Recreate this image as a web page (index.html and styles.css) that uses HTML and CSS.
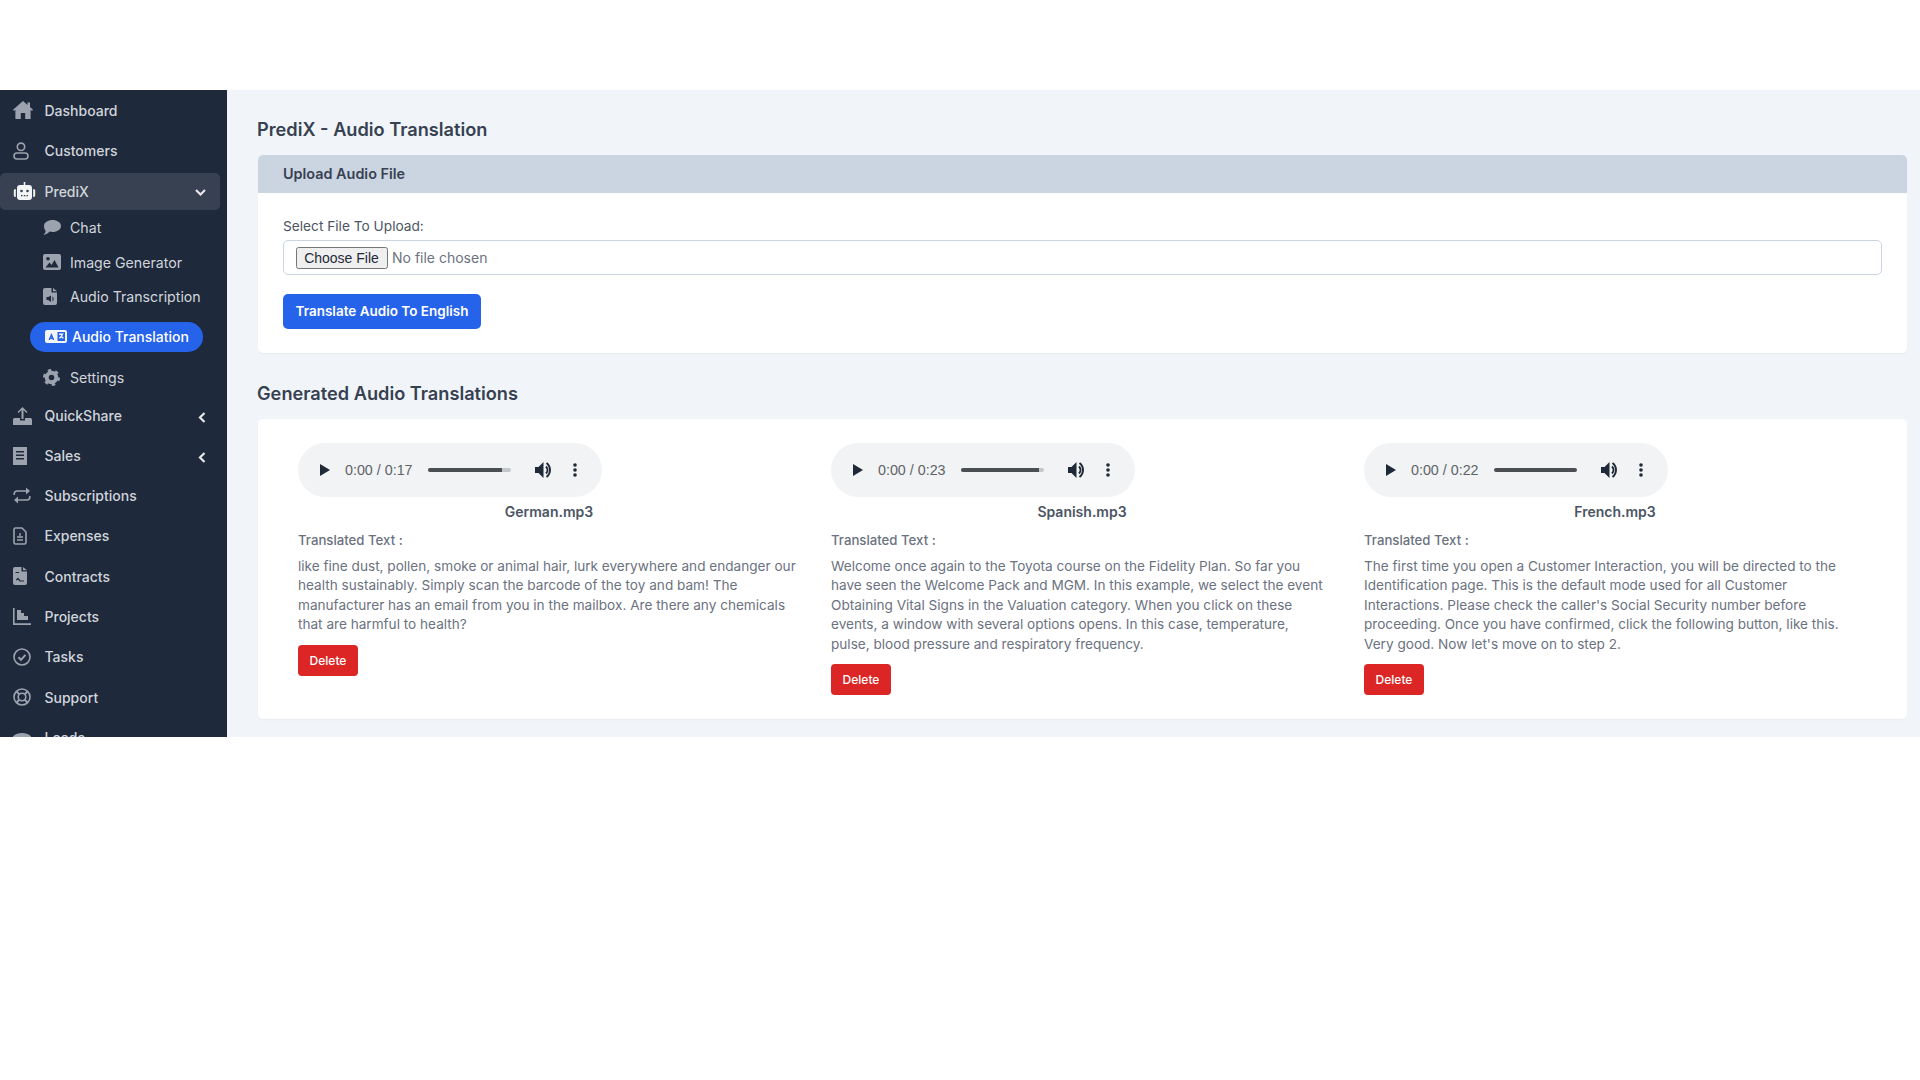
FILE: index.html
```html
<!DOCTYPE html>
<html lang="en">
<head>
<meta charset="utf-8">
<title>PrediX - Audio Translation</title>
<link rel="stylesheet" href="styles.css">
</head>
<body>
<div class="app">
  <aside class="sidebar">
    <nav class="nav">
      <a class="item"><span class="slot"><svg width="20" height="18" viewBox="0 0 20 18"><path d="M10 0 0 8.7l1 1.2 1.4-1.1V18h5.4v-6h4.4v6h5.4V8.800l1.400 1.100 1-1.200-3-2.600V1.500h-2.500v2.600z"/></svg></span>Dashboard</a>
      <a class="item"><span class="slot"><svg width="16" height="18" viewBox="0 0 16 18"><g class="line"><circle cx="8" cy="4.800" r="3.700"/><rect x="1" y="11" width="14" height="6" rx="3"/></g></svg></span>Customers</a>
      <a class="item active"><span class="slot"><svg class="white" width="23" height="18" viewBox="0 0 23 18"><path d="M10.700 0h1.600v3h-1.600z"/><path d="M7 3h9a3 3 0 0 1 3 3v9a3 3 0 0 1-3 3H7a3 3 0 0 1-3-3V6a3 3 0 0 1 3-3zM0.800 8.500A1.800 1.800 0 0 1 2.800 7v8a1.800 1.800 0 0 1-2-1.500zM22.200 8.500A1.800 1.800 0 0 0 20.200 7v8a1.800 1.800 0 0 0 2-1.500z"/><circle class="hole" cx="8.500" cy="9" r="1.300"/><circle class="hole" cx="14.500" cy="9" r="1.300"/><path class="hole" d="M8 13h1.500v1.200H8zM10.800 13h1.500v1.200h-1.500zM13.500 13H15v1.200h-1.500z"/></svg></span>PrediX<svg class="chev-down" width="11" height="7" viewBox="0 0 11 7"><path d="M1 1l4.500 4.500L10 1"/></svg></a>
      <div class="sub">
        <a class="subitem"><span class="subslot"><svg width="18" height="15" viewBox="0 0 18 15"><path d="M9.500 0C14 0 18 2.500 18 6s-4 6-8.500 6c-1 0-2-.1-2.800-.4C5.500 13 3 15 .5 14.700c1.300-1 2-2.200 2.200-3.900C1.500 9.800 1 8 1 6 1 2.500 5 0 9.500 0z"/></svg></span>Chat</a>
        <a class="subitem"><span class="subslot"><svg width="18" height="16" viewBox="0 0 18 16"><path fill-rule="evenodd" d="M2 0h14a2 2 0 0 1 2 2v12a2 2 0 0 1-2 2H2a2 2 0 0 1-2-2V2a2 2 0 0 1 2-2zm.5 13.500h13L11.500 6l-3 5-2-2.500zM5 3a1.800 1.800 0 1 0 0 3.600A1.800 1.800 0 0 0 5 3z"/></svg></span>Image Generator</a>
        <a class="subitem"><span class="subslot"><svg width="14" height="17" viewBox="0 0 14 17"><path fill-rule="evenodd" d="M2 0h6.500v4.500H14V15a2 2 0 0 1-2 2H2a2 2 0 0 1-2-2V2a2 2 0 0 1 2-2zm8 0 4 3.200h-4zM3.500 9v3h1.800L8 14V7.500L5.300 9zM9.500 8.500v5c1.500-.6 1.500-4.400 0-5z"/></svg></span>Audio Transcription</a>
        <a class="pill"><svg width="22" height="13" viewBox="0 0 22 13"><path fill-rule="evenodd" d="M2 0h18a2 2 0 0 1 2 2v9a2 2 0 0 1-2 2H2a2 2 0 0 1-2-2V2a2 2 0 0 1 2-2zm10.500 2v9H20V2zM6.200 3.500 3.500 10h1.500l.4-1h2l.4 1h1.500L6.700 3.500zm.2 4.100h-.8l.4-1.200zM14 3.500v1.400h2.200c-.4 1-1 1.900-2.200 2.700l.7 1.100c.6-.4 1.200-.8 1.600-1.300.5.500 1 .9 1.700 1.300l.7-1.100c-.7-.4-1.200-.8-1.600-1.300.5-.8.800-1.600 1-2.400h.8V3.500z"/></svg>Audio Translation</a>
        <a class="subitem settings"><span class="subslot"><svg width="17" height="17" viewBox="0 0 17 17"><circle class="gear-body" cx="8.500" cy="8.500" r="4.800"/><circle class="gear-teeth" cx="8.500" cy="8.500" r="7"/></svg></span>Settings</a>
      </div>
      <a class="item"><span class="slot"><svg width="19" height="18" viewBox="0 0 19 18"><path d="M9.500 0 4.500 5l1 1 3-3v9h2V3l3 3 1-1zM0 12.500a1.500 1.500 0 0 1 1.500-1.500H7v2.500h5V11h5.500a1.500 1.500 0 0 1 1.500 1.500V18H0z"/></svg></span>QuickShare<svg class="chev-left" width="8" height="11" viewBox="0 0 8 11"><path d="M6.500 1 2 5.500 6.500 10"/></svg></a>
      <a class="item tight"><span class="slot"><svg width="14" height="18" viewBox="0 0 14 18"><path fill-rule="evenodd" d="M0 0h14v18H0zM3 4v1.500h8V4zm0 3.500V9h8V7.500zM3 11v1.500h8V11z"/></svg></span>Sales<svg class="chev-left" width="8" height="11" viewBox="0 0 8 11"><path d="M6.500 1 2 5.500 6.500 10"/></svg></a>
      <a class="item"><span class="slot"><svg width="18" height="17" viewBox="0 0 18 17"><g class="line"><path d="M1.200 8V7a3 3 0 0 1 3-3H14"/><path d="M16.800 9v1a3 3 0 0 1-3 3H4"/></g><path d="M13 .5 17 4l-4 3.500zM5 9.500 1 13l4 3.500z"/></svg></span>Subscriptions</a>
      <a class="item"><span class="slot"><svg width="14" height="18" viewBox="0 0 14 18"><g class="line"><path d="M2.500 1H9l4 4v10.500a1.500 1.500 0 0 1-1.500 1.500h-9A1.500 1.500 0 0 1 1 15.500v-13A1.500 1.500 0 0 1 2.500 1z"/><path d="M4 10h6M4 13h6"/></g><path d="M6.300 6h1.400v3.500H6.300z"/></svg></span>Expenses</a>
      <a class="item"><span class="slot"><svg width="14" height="18" viewBox="0 0 14 18"><path fill-rule="evenodd" d="M2 0h6.500v4.500H14V16a2 2 0 0 1-2 2H2a2 2 0 0 1-2-2V2a2 2 0 0 1 2-2zm8 0 4 3.200h-4zM3 12.500l2-2 2.500 3H11V14.500H6.800L5 12.500l-1.300 1.300zM2.500 5v1H6V5z"/></svg></span>Contracts</a>
      <a class="item"><span class="slot"><svg width="18" height="17" viewBox="0 0 18 17"><path d="M0 0h1.600v15.200H18V17H0z"/><path d="M4 2h4v3h3v3h4v4H4z"/></svg></span>Projects</a>
      <a class="item"><span class="slot"><svg width="18" height="18" viewBox="0 0 18 18"><g class="line"><circle cx="9" cy="9" r="8"/><path class="thick" d="M5.500 9.300 8 11.800l4.500-5"/></g></svg></span>Tasks</a>
      <a class="item"><span class="slot"><svg width="18" height="18" viewBox="0 0 18 18"><g class="line"><circle cx="9" cy="9" r="8"/><circle cx="9" cy="9" r="3.800"/><path class="thick" d="M3.500 3.500l2.800 2.800M14.500 3.500l-2.800 2.800M3.500 14.500l2.800-2.800M14.500 14.500l-2.800-2.800"/></g></svg></span>Support</a>
      <a class="item"><span class="slot"><svg width="18" height="10" viewBox="0 0 18 10"><path d="M9 0c3.500 0 6.500 1 9 3.300V7l-4 1.500L12.500 5c-2-.7-5-.7-7 0L4 8.500 0 7V3.300C2.500 1 5.500 0 9 0z"/></svg></span>Leads</a>
    </nav>
  </aside>
  <main class="main">
    <h1 class="title">PrediX - Audio Translation</h1>
    <section class="card">
      <div class="card-head">Upload Audio File</div>
      <div class="card-body">
        <label class="field-label" for="file">Select File To Upload:</label>
        <div class="file-box"><input id="file" class="file" type="file"></div>
        <button class="btn-primary" type="button">Translate Audio To English</button>
      </div>
    </section>
    <h2 class="title second">Generated Audio Translations</h2>
    <section class="card results">
      <article class="result">
        <div class="player">
          <svg class="play" width="10" height="12" viewBox="0 0 10 12"><path d="M0 0l10 6-10 6z"/></svg>
          <span class="time">0:00 / 0:17</span>
          <span class="track"><span class="fill" style="width:90%"></span></span>
          <svg class="vol" width="17" height="16" viewBox="0 0 17 16"><path d="M0 5v6h3.500L8.500 16V0L3.500 5z"/><path class="vol-wave" d="M11 4.500a5 5 0 0 1 0 7M11.500 1a8.800 8.800 0 0 1 0 14"/></svg>
          <svg class="dots" width="4" height="14" viewBox="0 0 4 14"><circle cx="2" cy="2" r="1.800"/><circle cx="2" cy="7" r="1.800"/><circle cx="2" cy="12" r="1.800"/></svg>
        </div>
        <div class="name">German.mp3</div>
        <div class="tt-label">Translated Text :</div>
        <p class="tt">like fine dust, pollen, smoke or animal hair, lurk everywhere and endanger our health sustainably. Simply scan the barcode of the toy and bam! The manufacturer has an email from you in the mailbox. Are there any chemicals that are harmful to health?</p>
        <button class="btn-delete" type="button">Delete</button>
      </article>
      <article class="result">
        <div class="player">
          <svg class="play" width="10" height="12" viewBox="0 0 10 12"><path d="M0 0l10 6-10 6z"/></svg>
          <span class="time">0:00 / 0:23</span>
          <span class="track"><span class="fill" style="width:95%"></span></span>
          <svg class="vol" width="17" height="16" viewBox="0 0 17 16"><path d="M0 5v6h3.500L8.500 16V0L3.500 5z"/><path class="vol-wave" d="M11 4.500a5 5 0 0 1 0 7M11.500 1a8.800 8.800 0 0 1 0 14"/></svg>
          <svg class="dots" width="4" height="14" viewBox="0 0 4 14"><circle cx="2" cy="2" r="1.800"/><circle cx="2" cy="7" r="1.800"/><circle cx="2" cy="12" r="1.800"/></svg>
        </div>
        <div class="name">Spanish.mp3</div>
        <div class="tt-label">Translated Text :</div>
        <p class="tt">Welcome once again to the Toyota course on the Fidelity Plan. So far you have seen the Welcome Pack and MGM. In this example, we select the event Obtaining Vital Signs in the Valuation category. When you click on these events, a window with several options opens. In this case, temperature, pulse, blood pressure and respiratory frequency.</p>
        <button class="btn-delete" type="button">Delete</button>
      </article>
      <article class="result">
        <div class="player">
          <svg class="play" width="10" height="12" viewBox="0 0 10 12"><path d="M0 0l10 6-10 6z"/></svg>
          <span class="time">0:00 / 0:22</span>
          <span class="track"><span class="fill" style="width:100%"></span></span>
          <svg class="vol" width="17" height="16" viewBox="0 0 17 16"><path d="M0 5v6h3.500L8.500 16V0L3.500 5z"/><path class="vol-wave" d="M11 4.500a5 5 0 0 1 0 7M11.500 1a8.800 8.800 0 0 1 0 14"/></svg>
          <svg class="dots" width="4" height="14" viewBox="0 0 4 14"><circle cx="2" cy="2" r="1.800"/><circle cx="2" cy="7" r="1.800"/><circle cx="2" cy="12" r="1.800"/></svg>
        </div>
        <div class="name">French.mp3</div>
        <div class="tt-label">Translated Text :</div>
        <p class="tt">The first time you open a Customer Interaction, you will be directed to the Identification page. This is the default mode used for all Customer Interactions. Please check the caller's Social Security number before proceeding. Once you have confirmed, click the following button, like this. Very good. Now let's move on to step 2.</p>
        <button class="btn-delete" type="button">Delete</button>
      </article>
    </section>
  </main>
</div>
</body>
</html>
```
FILE: styles.css
```css
* { box-sizing: border-box; }
html, body { margin: 0; background: #fff; }
body {
  padding-top: 90px;
  font-family: Inter, "Liberation Sans", sans-serif;
  color: #374151;
  height: 1080px;
  overflow: hidden;
}
.app { display: flex; height: 647px; overflow: hidden; background: #f1f5f9; }

/* Sidebar */
.sidebar { width: 227px; flex: none; background: #1e293b; overflow: hidden; }
.nav { display: flex; flex-direction: column; gap: 3.400px; padding-top: 2.500px; }
.item {
  flex: none;
  display: flex;
  align-items: center;
  width: 220px;
  height: 37px;
  padding-bottom: 1.500px;
  border-radius: 5px;
  font-size: 14px;
  font-weight: 500;
  color: #d1d5db;
}
.item.tight { margin: -.4px 0 -.800px; }
.item.active { background: #374151; }
.slot { width: 44.500px; padding-left: 13px; display: flex; align-items: center; flex: none; }
.nav svg { fill: #9ca3af; display: block; flex: none; }
.nav svg.white, .nav .pill svg { fill: #f3f4f6; }
.line { fill: none; stroke: #9ca3af; stroke-width: 1.600; }
.line .thick { stroke-width: 2; }
.hole { fill: #374151; }
.chev-down, .chev-left { margin-left: auto; }
.nav .chev-down { fill: none; stroke: #e5e7eb; stroke-width: 2.200; margin: 2px 14px 0 auto; }
.nav .chev-left { fill: none; stroke: #e5e7eb; stroke-width: 2.200; margin: 4px 14px 0 auto; }
.sub { display: flex; flex-direction: column; margin: -3.400px 0 -.100px; }
.subitem {
  display: flex;
  align-items: center;
  height: 34.500px;
  font-size: 14.150px;
  color: #d1d5db;
  font-weight: 400;
}
.subslot { width: 70px; padding-left: 43px; flex: none; display: flex; }
.subitem.settings { height: 35px; }
.pill {
  display: flex;
  align-items: center;
  gap: 5px;
  width: 173px;
  height: 30px;
  margin: 8px 0 8px 30px;
  padding-left: 15px;
  border-radius: 15px;
  background: #2563eb;
  color: #fff;
  font-size: 14px;
  font-weight: 500;
}
.nav .gear-body { fill: none; stroke: #9ca3af; stroke-width: 4; }
.nav .gear-teeth { fill: none; stroke: #9ca3af; stroke-width: 3; stroke-dasharray: 3.300 4; }

/* Main */
.main { flex: 1; min-width: 0; padding: 26px 13px 0 30px; }
.title { margin: 0; font-size: 18.200px; line-height: 26px; font-weight: 600; color: #374151; }
.title.second { margin-top: 27px; }
.card {
  margin: 13px 0 0 1px;
  background: #fff;
  border-radius: 5px;
  box-shadow: 0 1px 2px rgba(0, 0, 0, .04);
  overflow: hidden;
}
.card-head {
  height: 37.500px;
  padding-left: 25px;
  background: #cbd5e1;
  font-size: 14.400px;
  font-weight: 600;
  line-height: 37px;
  color: #374151;
}
.card-body { display: flex; flex-direction: column; align-items: flex-start; padding: 23.500px 25px 24px; }
.field-label { font-size: 13.700px; line-height: 20px; color: #4b5563; }
.file-box {
  width: 100%;
  height: 35px;
  margin-top: 4px;
  padding-left: 11.500px;
  display: flex;
  align-items: center;
  border: 1px solid #cbd5e1;
  border-radius: 5px;
}
.file { font-family: Inter, sans-serif; font-size: 14px; color: #6b7280; }
.file::file-selector-button { width: 92px; height: 22px; margin-right: 4.500px; color: #1f2937; font-family: "Liberation Sans", Arial, sans-serif; font-size: 14px; }
.btn-primary {
  margin-top: 19px;
  width: 198px;
  height: 34.500px;
  padding: 0;
  border: 0;
  border-radius: 5px;
  background: #2563eb;
  color: #fff;
  font-family: Inter, sans-serif;
  font-size: 13.500px;
  font-weight: 600;
}

/* Results */
.results {
  display: grid;
  grid-template-columns: repeat(3, 502px);
  column-gap: 31px;
  align-items: start;
  height: 300.500px;
  padding: 24px 40px 24px;
}
.player {
  display: flex;
  align-items: center;
  width: 304px;
  height: 54.500px;
  border-radius: 28px;
  background: #f1f3f4;
  padding-left: 22px;
}
.player svg { display: block; flex: none; }
.play, .dots { fill: #1f2937; }
.vol { fill: #1f2937; }
.vol-wave { fill: none; stroke: #1f2937; stroke-width: 2; }
.time {
  flex: none;
  width: 82.500px;
  margin-left: 15px;
  font-family: "Liberation Sans", Arial, sans-serif;
  font-size: 14.300px;
  color: #5f6368;
}
.track { flex: none; display: block; width: 83px; height: 4px; border-radius: 2px; background: #c4c7c9; overflow: hidden; }
.fill { display: block; height: 100%; background: #4b4f54; }
.vol { margin-left: 24px; }
.dots { margin-left: 21.500px; }
.name { margin-top: 5px; text-align: center; font-size: 14px; line-height: 20px; font-weight: 600; color: #4b5563; }
.tt-label { margin-top: 8px; font-size: 13.200px; line-height: 20px; font-weight: 500; color: #6b7280; }
.tt { margin: 6.500px 0 0; padding-right: 3px; font-size: 13.600px; line-height: 19.600px; color: #6b7280; }
.btn-delete {
  display: block;
  margin-top: 10px;
  width: 60px;
  height: 31px;
  padding: 0;
  border: 0;
  border-radius: 4px;
  background: #dc2626;
  color: #fff;
  font-family: Inter, sans-serif;
  font-size: 12px;
  font-weight: 500;
}
```
